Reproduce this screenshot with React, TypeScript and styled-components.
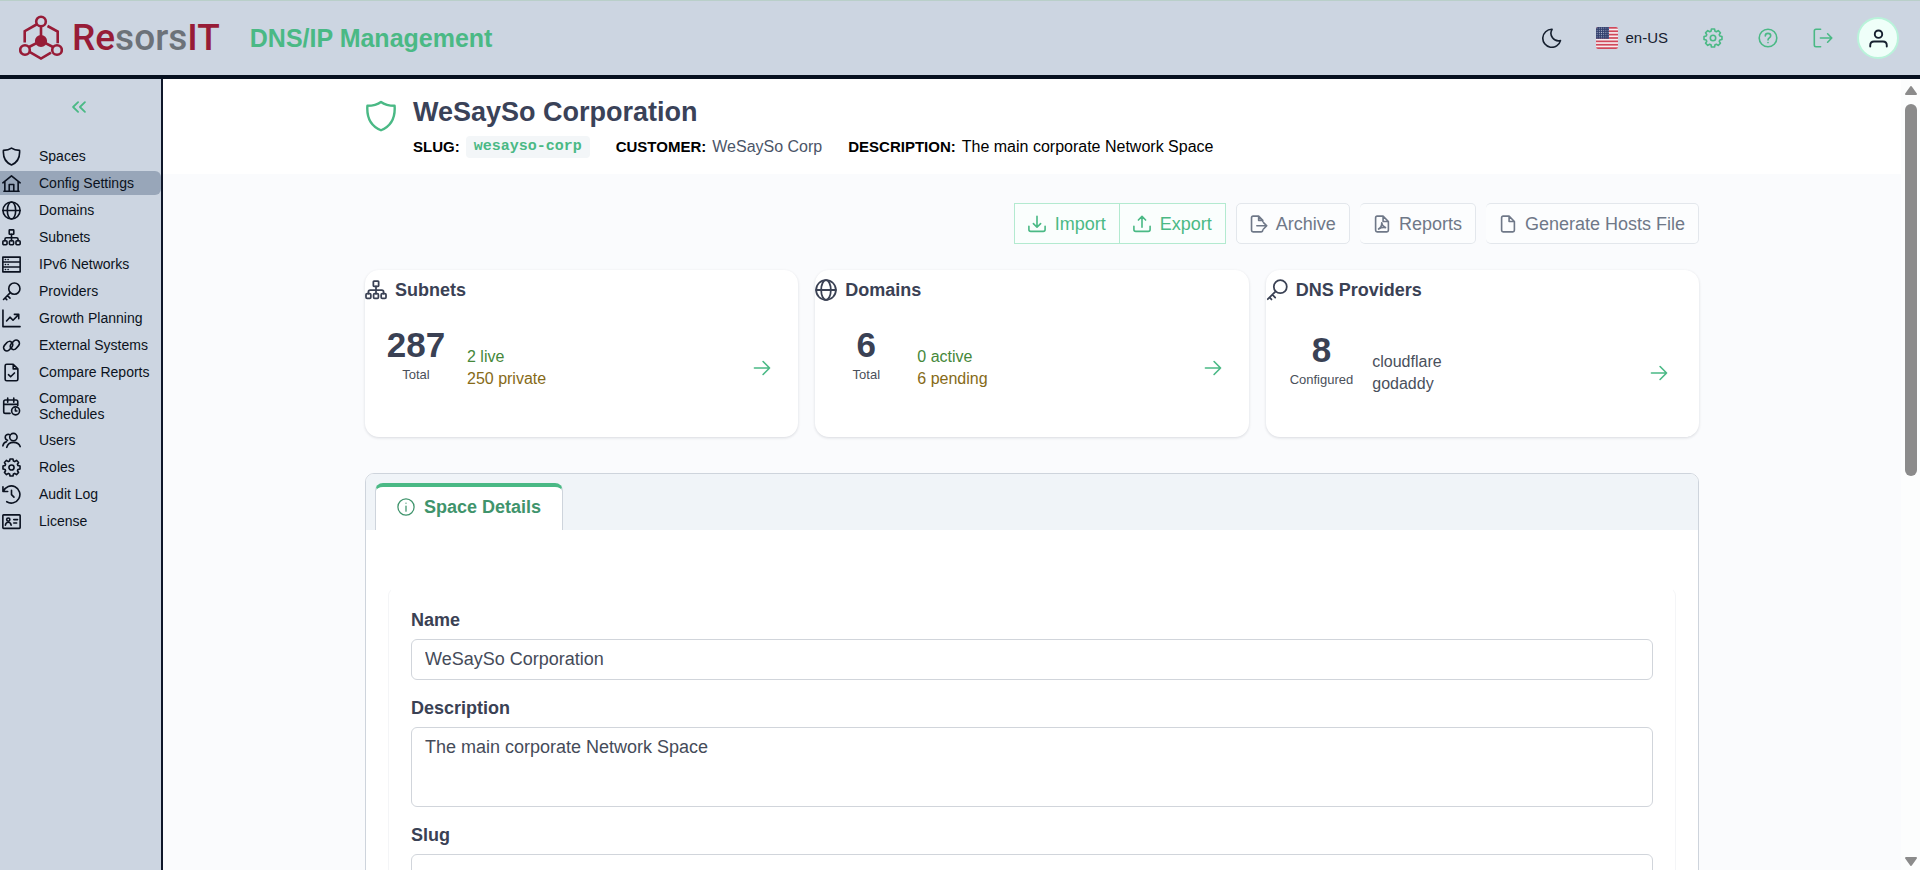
import React from "react";
import styled, { createGlobalStyle, css } from "styled-components";

const sans = `"Liberation Sans", Arial, sans-serif`;
const green = "#4ab985";
const ink = "#3a4154";

const GlobalStyle = createGlobalStyle`
  *, *::before, *::after { box-sizing: border-box; }
  html, body { margin: 0; padding: 0; }
  body { font-family: ${sans}; font-size: 18px; color: ${ink}; background: #fafbfd; }
  button, input, textarea { font: inherit; color: inherit; margin: 0; }
  a { color: inherit; text-decoration: none; }
  h1, h2, p, ul, dl, dd { margin: 0; padding: 0; }
`;

/* ---------- icons ---------- */

const gearOutline = (() => {
  const points: string[] = [];
  for (let i = 0; i < 8; i++) {
    const base = (i * Math.PI) / 4 - Math.PI / 2;
    [
      [-0.29, 7.1],
      [-0.17, 9.1],
      [0.17, 9.1],
      [0.29, 7.1],
    ].forEach(([offset, radius]) => {
      const x = 10 + radius * Math.cos(base + offset);
      const y = 10 + radius * Math.sin(base + offset);
      points.push(`${x.toFixed(2)} ${y.toFixed(2)}`);
    });
  }
  return `M${points.join("L")}Z`;
})();

const glyphs = {
  shield: <path d="M10 1.200C12 2.700 15.500 3.600 18.500 3.600C19 10.500 16.500 16.200 10 18.900C3.500 16.200 1 10.500 1.500 3.600C4.500 3.600 8 2.700 10 1.200Z" />,
  home: (
    <>
      <path d="M.9 9.300L10 1.900l9.100 7.400M3 7.800v10.300M17 7.800v10.300M2 18.200h16" />
      <path d="M7.600 18v-7h4.800v7" />
    </>
  ),
  globe: (
    <>
      <circle cx="10" cy="10" r="9" />
      <ellipse cx="10" cy="10" rx="4.400" ry="9" />
      <path d="M1 10h18" />
    </>
  ),
  sitemap: (
    <>
      <rect x="7.600" y="2" width="4.800" height="4.600" rx=".6" />
      <rect x=".9" y="13.400" width="4.400" height="4.200" rx="1" />
      <rect x="7.800" y="13.400" width="4.400" height="4.200" rx="1" />
      <rect x="14.700" y="13.400" width="4.400" height="4.200" rx="1" />
      <path d="M10 6.600v6.800M3.100 13.400v-1.600q0-1.600 1.600-1.600h10.600q1.600 0 1.600 1.600v1.600" />
    </>
  ),
  server: (
    <>
      <path d="M.9 2.200h18.200v15.600H.9ZM.9 7.400h18.200M.9 12.600h18.200" />
      <path d="M3.600 4.800h.1M6.400 4.800h.1M3.600 10h.1M6.400 10h.1M3.600 15.200h.1M6.400 15.200h.1" />
    </>
  ),
  key: (
    <>
      <circle cx="13" cy="7" r="5.900" />
      <path d="M8.800 11.200L1.600 18.400M5.800 14.300l2.600 2.600M3.200 16.800l1.800 1.800" />
    </>
  ),
  growth: (
    <>
      <path d="M1 1.200v17.400h18" />
      <path d="M4.800 12.600l3.600-4 3.200 3.200 5.600-5.600M13 5.600h4.600v4.600" />
    </>
  ),
  chain: (
    <>
      <rect x="1" y="7.200" width="11" height="7" rx="3.500" transform="rotate(-48 6.500 10.700)" />
      <rect x="8" y="5.800" width="11" height="7" rx="3.500" transform="rotate(-48 13.500 9.300)" />
    </>
  ),
  fileCheck: (
    <>
      <path d="M11.800 1.300H5q-1.700 0-1.700 1.700v14q0 1.700 1.700 1.700h10q1.700 0 1.700-1.700V6.200ZM11.800 1.300v4.900h4.900" />
      <path d="M6.800 12.300l2.300 2.200 4-4" />
    </>
  ),
  calendarClock: (
    <>
      <path d="M8.500 17.200H3.600q-1.800 0-1.800-1.800V5q0-1.800 1.800-1.800h11.200q1.800 0 1.800 1.800v4M1.800 7.800h14.800M6 1v4.400M12.400 1v4.400" />
      <circle cx="14.300" cy="14.600" r="4.200" />
      <path d="M14.100 12.400v2.300h1.600" />
    </>
  ),
  users: (
    <>
      <circle cx="12" cy="6.400" r="3.900" />
      <path d="M5 17.200c.8-3.300 3.500-5.200 7-5.200s6.300 1.700 7.100 4.400M7.600 3.700c-2.200-.7-4.200.8-4.200 3 0 1.500.9 2.700 2.400 3.100M4.800 11.300C2.700 11.800 1.300 13.200.9 15.600" />
    </>
  ),
  gear: (
    <>
      <path d={gearOutline} />
      <circle cx="10" cy="10" r="2.700" />
    </>
  ),
  history: (
    <>
      <path d="M1 1.800v5h5M1.500 6.600A9 9 0 1 1 5 17.600" />
      <path d="M10 5.600v4.600l2.600 2.600" />
    </>
  ),
  license: (
    <>
      <rect x=".9" y="3" width="18.200" height="14.200" rx=".8" />
      <circle cx="6.600" cy="8" r="1.700" />
      <path d="M3.600 13.800c.3-2 1.300-3 3-3s2.700 1 3 3M12.400 8h4M12.400 11.600h3" />
    </>
  ),
  moon: <path d="M9.700 1.300h.4a7.600 7.600 0 0 0 8.400 11.300A9 9 0 1 1 9.700 1.300Z" />,
  help: (
    <>
      <circle cx="10" cy="10" r="8.800" />
      <path d="M7.300 7.900c0-1.500 1.200-2.500 2.700-2.500s2.700 1 2.700 2.400c0 2-2.700 2.200-2.700 4.100" />
      <path d="M10 14.500v.1" />
    </>
  ),
  logout: <path d="M7.600 1.300H3q-1.700 0-1.700 1.700v14q0 1.700 1.700 1.700h4.600M7.400 10h11.400M14.600 5.800l4.200 4.200-4.200 4.200" />,
  user: (
    <>
      <circle cx="10" cy="5.400" r="3.900" />
      <path d="M1.300 18.400v-1.200q0-4 4-4h9.400q4 0 4 4v1.200" />
    </>
  ),
  collapse: <path d="M9 4.600L3.400 10 9 15.400M16.600 4.600L11 10l5.600 5.400" />,
  download: <path d="M1 12.600v3.600q0 2 2 2h14q2 0 2-2v-3.600M10 1.400v12M6 9.600l4 4 4-4" />,
  upload: <path d="M1 12.600v3.600q0 2 2 2h14q2 0 2-2v-3.600M10 13.600v-12M6 5.600l4-4 4 4" />,
  fileOut: (
    <>
      <path d="M14.200 7.200V6L9.600 1.300H3.400q-1.700 0-1.700 1.700v14q0 1.700 1.700 1.700h9.100q1.700 0 1.700-1.700v-.4M9.600 1.300V6h4.600" />
      <path d="M7.600 12h11M15 8.400l3.600 3.600-3.600 3.600" />
    </>
  ),
  filePdf: (
    <>
      <path d="M11.200 1.300H4.600q-1.700 0-1.700 1.700v14q0 1.700 1.700 1.700h10.800q1.700 0 1.700-1.700V7.200ZM11.200 1.300v5.900h5.900" />
      <path d="M6.200 15.600c2.400-1.400 3.700-4 3.500-7 .3 2.800 1.600 4.600 4.200 5.400-2.800-.4-5.500.2-7.700 1.600Z" />
    </>
  ),
  file: <path d="M11.200 1.300H4.600q-1.700 0-1.700 1.700v14q0 1.700 1.700 1.700h10.800q1.700 0 1.700-1.700V7.200ZM11.200 1.300v5.900h5.900" />,
  arrowRight: <path d="M1.600 10h16.800M11.200 2.800l7.200 7.200-7.200 7.200" />,
  info: (
    <>
      <circle cx="10" cy="10" r="9" />
      <path d="M10 9v5.600M10 5.600v.1" />
    </>
  ),
};

type GlyphName = keyof typeof glyphs;

const Svg = styled.svg`
  display: block;
  flex: none;
  fill: none;
  stroke: currentColor;
  stroke-linecap: round;
  stroke-linejoin: round;
`;

function Icon({ name, size = 20, weight = 1.6 }: { name: GlyphName; size?: number; weight?: number }) {
  return (
    <Svg width={size} height={size} viewBox="0 0 20 20" strokeWidth={weight} aria-hidden="true">
      {glyphs[name]}
    </Svg>
  );
}

/* ---------- frame ---------- */

const Shell = styled.div`
  display: flex;
  flex-direction: column;
  height: 100vh;
  overflow: hidden;
`;

const TopBar = styled.header`
  display: flex;
  align-items: center;
  flex: none;
  height: 79px;
  padding: 0 21px 0 19px;
  background: #ccd5e1;
  border-top: 1px solid #b9cfc9;
  border-bottom: 4px solid #06101f;
`;

const Brand = styled.a`
  display: flex;
  align-items: center;
  gap: 9px;
`;

const Wordmark = styled.span`
  font-family: Roboto, ${sans};
  font-size: 37px;
  line-height: 42px;
  font-weight: 500;
  color: #971c37;
`;

const WordmarkGrey = styled.span`
  color: #6c7279;
`;

const AppTitle = styled.span`
  margin-left: 30px;
  font-size: 25px;
  line-height: 30px;
  font-weight: 700;
  color: ${green};
`;

const TopActions = styled.div`
  display: flex;
  align-items: center;
  gap: 13px;
  margin-left: auto;
`;

const IconButton = styled.button<{ $accent?: boolean; $avatar?: boolean }>`
  display: flex;
  align-items: center;
  justify-content: center;
  width: 42px;
  height: 42px;
  padding: 0;
  border: 0;
  border-radius: 50%;
  background: transparent;
  color: ${(p) => (p.$accent ? green : "#16202f")};
  cursor: pointer;
  ${(p) =>
    p.$avatar &&
    css`
      background: #effff9;
      border: 2px solid #b9f3da;
    `}
`;

const LocaleButton = styled.button`
  display: flex;
  align-items: center;
  gap: 7px;
  padding: 0 11px 0 10px;
  border: 0;
  background: transparent;
  color: #16202f;
  font-size: 15px;
  line-height: 20px;
  cursor: pointer;
`;

const Body = styled.div`
  display: flex;
  flex: 1;
  min-height: 0;
`;

const SideBar = styled.nav`
  flex: none;
  width: 163px;
  background: #ccd5e1;
  border-right: 2px solid #0f172a;
`;

const CollapseButton = styled.button`
  display: flex;
  align-items: center;
  justify-content: center;
  width: 100%;
  height: 55px;
  padding: 0 4px 0 0;
  border: 0;
  background: transparent;
  color: ${green};
  cursor: pointer;
`;

const NavList = styled.ul`
  display: flex;
  flex-direction: column;
  gap: 3px;
  padding-top: 10px;
  list-style: none;
`;

const NavLink = styled.a<{ $active: boolean }>`
  display: flex;
  align-items: center;
  gap: 18px;
  min-height: 24px;
  padding-left: 2px;
  border-radius: 0 6px 6px 0;
  background: ${(p) => (p.$active ? "#98a6b9" : "transparent")};
  color: #0b1220;
  font-size: 14px;
  line-height: 16px;
`;

const NavIcon = styled.span`
  display: flex;
  flex: none;
`;

const NavLabel = styled.span`
  padding: 3px 0;
`;

/* ---------- content ---------- */

const Main = styled.main`
  flex: 1;
  min-width: 0;
  overflow-y: auto;
  scrollbar-width: none;
  background: #fafbfd;
`;

const Container = styled.div`
  max-width: 1334px;
  margin: 0 auto;
`;

const Hero = styled.section`
  padding: 17px 0 16px;
  background: #ffffff;
`;

const HeroRow = styled(Container)`
  display: flex;
  gap: 16px;
`;

const HeroIcon = styled.span`
  padding-top: 4px;
  color: ${green};
`;

const HeroTitle = styled.h1`
  font-size: 27px;
  line-height: 32px;
  font-weight: 700;
  color: #3a4258;
`;

const MetaList = styled.dl`
  display: flex;
  gap: 26px;
  margin-top: 8px;
`;

const MetaItem = styled.div`
  display: flex;
  align-items: center;
  gap: 6px;
  font-size: 16px;
  line-height: 22px;
`;

const MetaLabel = styled.dt`
  font-size: 15px;
  font-weight: 700;
  color: #000000;
`;

const MetaValue = styled.dd<{ $muted?: boolean }>`
  color: ${(p) => (p.$muted ? "#4b5568" : "#000000")};
`;

const SlugChip = styled.dd`
  padding: 0 8px;
  border-radius: 4px;
  background: #f3f6f8;
  color: ${green};
  font-family: "Liberation Mono", "Courier New", monospace;
  font-size: 15px;
  font-weight: 700;
`;

const ToolBar = styled.div`
  display: flex;
  justify-content: flex-end;
  gap: 10px;
  padding: 29px 0 26px;
`;

const ButtonPair = styled.div`
  display: flex;
`;

const ToolButton = styled.button<{ $accent?: boolean }>`
  display: flex;
  align-items: center;
  gap: 8px;
  height: 41px;
  padding: 0 13px;
  border: 1px solid #e3e7ec;
  border-radius: 5px;
  background: #fcfdfe;
  color: #6f7888;
  font-size: 18px;
  line-height: 22px;
  cursor: pointer;
  ${(p) =>
    p.$accent &&
    css`
      gap: 9px;
      border-color: #b3ead0;
      border-radius: 0;
      background: #fafefd;
      color: ${green};
      & + & {
        border-left-width: 0;
      }
    `}
`;

const CardGrid = styled.div`
  display: grid;
  grid-template-columns: repeat(3, 1fr);
  gap: 17px;
`;

const Card = styled.section`
  border-radius: 14px;
  background: #ffffff;
  box-shadow: 0 1px 3px rgba(15, 23, 42, 0.14);
`;

const CardHead = styled.h2`
  display: flex;
  align-items: center;
  gap: 8px;
  height: 40px;
  font-size: 18px;
  line-height: 22px;
  font-weight: 700;
  color: ${ink};
`;

const CardBody = styled.div<{ $roomy?: boolean }>`
  display: flex;
  gap: ${(p) => (p.$roomy ? "19px" : "21px")};
  padding: ${(p) => (p.$roomy ? "18px 31px 42px 24px" : "13px 27px 43px 21px")};
`;

const Stat = styled.div`
  min-width: 60px;
  text-align: center;
`;

const StatNumber = styled.p`
  font-size: 35px;
  line-height: 44px;
  font-weight: 700;
`;

const StatCaption = styled.p`
  font-size: 13px;
  line-height: 16px;
  color: #4a4f5a;
`;

const Breakdown = styled.div`
  display: flex;
  align-items: center;
  justify-content: space-between;
  flex: 1;
  padding-top: 23px;
`;

const tones = { green: "#45883a", amber: "#866a17", grey: "#4a505c" };

const BreakdownLine = styled.p<{ $tone: keyof typeof tones }>`
  font-size: 16px;
  line-height: 22px;
  color: ${(p) => tones[p.$tone]};
`;

const CardLink = styled.a`
  color: ${green};
`;

const Panel = styled.section`
  margin: 36px 0;
  border: 1px solid #ced4dc;
  border-radius: 9px;
  background: #ffffff;
`;

const TabStrip = styled.div`
  display: flex;
  padding: 9px 9px 0;
  border-radius: 8px 8px 0 0;
  background: #f0f4f8;
`;

const Tab = styled.button`
  display: flex;
  align-items: center;
  gap: 9px;
  height: 47px;
  padding: 0 21px 3px;
  border: 1px solid #ced4dc;
  border-top: 4px solid ${green};
  border-bottom: 0;
  border-radius: 8px 8px 0 0;
  background: #ffffff;
  color: #3f946c;
  font-size: 18px;
  line-height: 22px;
  font-weight: 700;
  cursor: pointer;
`;

const TabPanel = styled.div`
  padding: 57px 22px 22px;
`;

const Form = styled.form`
  display: flex;
  flex-direction: column;
  gap: 17px;
  padding: 21px 22px 22px;
  border: 1px solid #f4f5f7;
  border-top-color: #ffffff;
  border-radius: 9px;
`;

const Field = styled.div`
  display: flex;
  flex-direction: column;
  gap: 8px;
`;

const FieldLabel = styled.label`
  font-size: 18px;
  line-height: 22px;
  font-weight: 700;
`;

const control = css`
  width: 100%;
  padding: 8px 13px;
  border: 1px solid #d1d5db;
  border-radius: 6px;
  background: #ffffff;
  color: #454b59;
  font-size: 18px;
  line-height: 22px;
  outline: none;
`;

const TextInput = styled.input`
  ${control}
  height: 41px;
`;

const TextArea = styled.textarea`
  ${control}
  display: block;
  height: 80px;
  resize: none;
`;

/* ---------- scroll rail ---------- */

const Rail = styled.div`
  display: flex;
  flex-direction: column;
  align-items: center;
  flex: none;
  width: 19px;
  padding: 6px 0 3px 1px;
  background: #fcfdfd;
  color: #8b8b8b;
`;

const RailTrack = styled.div`
  flex: 1;
  width: 12px;
  padding: 8px 0;
`;

const RailThumb = styled.div`
  width: 12px;
  height: 50%;
  border-radius: 6px;
  background: #8b8b8b;
`;

function RailArrow({ down }: { down?: boolean }) {
  return (
    <svg width="14" height="11" viewBox="0 0 14 11" fill="currentColor" stroke="currentColor" strokeWidth="2" strokeLinejoin="round" aria-hidden="true">
      <path d={down ? "M2 2h10L7 9Z" : "M2 9h10L7 2Z"} />
    </svg>
  );
}

/* ---------- drawings ---------- */

function LogoMark() {
  return (
    <svg width="44" height="46" viewBox="0 0 44 46" fill="none" stroke="#971c37" strokeWidth="2.600" aria-hidden="true">
      <circle cx="22" cy="6.500" r="4.800" />
      <circle cx="6" cy="35" r="4.800" />
      <circle cx="38" cy="35" r="4.800" />
      <path d="M17.500 9.500L5.700 16.200v11.300M28.500 11l10.200 5.600v11.600M22 11.500V22M10 32l9-4.600M34 32l-9-4.600M10.500 36.800L22 43.500l10-5.800" />
      <circle cx="22" cy="26" r="4.800" fill="#971c37" />
    </svg>
  );
}

function UsFlag() {
  return (
    <svg width="22" height="22" viewBox="0 0 22 22" aria-hidden="true">
      <defs>
        <clipPath id="flagShape">
          <rect width="22" height="22" rx="2" />
        </clipPath>
        <pattern id="flagStars" width="2.200" height="2.200" patternUnits="userSpaceOnUse">
          <rect width="2.200" height="2.200" fill="#33416f" />
          <circle cx="1.100" cy="1.100" r=".5" fill="#b6bdd3" />
        </pattern>
      </defs>
      <g clipPath="url(#flagShape)">
        <rect width="22" height="22" fill="#f6eef0" />
        {[0, 1, 2, 3, 4, 5, 6].map((i) => (
          <rect key={i} y={i * 3.38} width="22" height="1.700" fill="#d0485a" />
        ))}
        <rect width="13" height="11.800" fill="url(#flagStars)" />
      </g>
    </svg>
  );
}

/* ---------- data ---------- */

const navItems: { label: string; icon: GlyphName }[] = [
  { label: "Spaces", icon: "shield" },
  { label: "Config Settings", icon: "home" },
  { label: "Domains", icon: "globe" },
  { label: "Subnets", icon: "sitemap" },
  { label: "IPv6 Networks", icon: "server" },
  { label: "Providers", icon: "key" },
  { label: "Growth Planning", icon: "growth" },
  { label: "External Systems", icon: "chain" },
  { label: "Compare Reports", icon: "fileCheck" },
  { label: "Compare Schedules", icon: "calendarClock" },
  { label: "Users", icon: "users" },
  { label: "Roles", icon: "gear" },
  { label: "Audit Log", icon: "history" },
  { label: "License", icon: "license" },
];

const cards: {
  title: string;
  icon: GlyphName;
  total: number;
  caption: string;
  roomy?: boolean;
  lines: { text: string; tone: keyof typeof tones }[];
}[] = [
  {
    title: "Subnets",
    icon: "sitemap",
    total: 287,
    caption: "Total",
    lines: [
      { text: "2 live", tone: "green" },
      { text: "250 private", tone: "amber" },
    ],
  },
  {
    title: "Domains",
    icon: "globe",
    total: 6,
    caption: "Total",
    lines: [
      { text: "0 active", tone: "green" },
      { text: "6 pending", tone: "amber" },
    ],
  },
  {
    title: "DNS Providers",
    icon: "key",
    total: 8,
    caption: "Configured",
    roomy: true,
    lines: [
      { text: "cloudflare", tone: "grey" },
      { text: "godaddy", tone: "grey" },
    ],
  },
];

export default function App() {
  return (
    <Shell>
      <GlobalStyle />
      <TopBar>
        <Brand href="#">
          <LogoMark />
          <Wordmark>
            Re<WordmarkGrey>sors</WordmarkGrey>IT
          </Wordmark>
        </Brand>
        <AppTitle>DNS/IP Management</AppTitle>
        <TopActions>
          <IconButton aria-label="Dark mode">
            <Icon name="moon" />
          </IconButton>
          <LocaleButton>
            <UsFlag />
            en-US
          </LocaleButton>
          <IconButton $accent aria-label="Settings">
            <Icon name="gear" />
          </IconButton>
          <IconButton $accent aria-label="Help">
            <Icon name="help" />
          </IconButton>
          <IconButton $accent aria-label="Log out">
            <Icon name="logout" />
          </IconButton>
          <IconButton $avatar aria-label="Account">
            <Icon name="user" size={19} weight={2} />
          </IconButton>
        </TopActions>
      </TopBar>
      <Body>
        <SideBar>
          <CollapseButton aria-label="Collapse menu">
            <Icon name="collapse" size={18} weight={2} />
          </CollapseButton>
          <NavList>
            {navItems.map((item) => (
              <li key={item.label}>
                <NavLink href="#" $active={item.label === "Config Settings"}>
                  <NavIcon>
                    <Icon name={item.icon} size={19} weight={1.7} />
                  </NavIcon>
                  <NavLabel>{item.label}</NavLabel>
                </NavLink>
              </li>
            ))}
          </NavList>
        </SideBar>
        <Main>
          <Hero>
            <HeroRow>
              <HeroIcon>
                <Icon name="shield" size={32} weight={1.5} />
              </HeroIcon>
              <div>
                <HeroTitle>WeSaySo Corporation</HeroTitle>
                <MetaList>
                  <MetaItem>
                    <MetaLabel>SLUG:</MetaLabel>
                    <SlugChip>wesayso-corp</SlugChip>
                  </MetaItem>
                  <MetaItem>
                    <MetaLabel>CUSTOMER:</MetaLabel>
                    <MetaValue $muted>WeSaySo Corp</MetaValue>
                  </MetaItem>
                  <MetaItem>
                    <MetaLabel>DESCRIPTION:</MetaLabel>
                    <MetaValue>The main corporate Network Space</MetaValue>
                  </MetaItem>
                </MetaList>
              </div>
            </HeroRow>
          </Hero>
          <Container>
            <ToolBar>
              <ButtonPair>
                <ToolButton $accent>
                  <Icon name="download" size={18} weight={1.8} />
                  Import
                </ToolButton>
                <ToolButton $accent>
                  <Icon name="upload" size={18} weight={1.8} />
                  Export
                </ToolButton>
              </ButtonPair>
              <ToolButton>
                <Icon name="fileOut" size={18} weight={1.8} />
                Archive
              </ToolButton>
              <ToolButton>
                <Icon name="filePdf" size={18} weight={1.8} />
                Reports
              </ToolButton>
              <ToolButton>
                <Icon name="file" size={18} weight={1.8} />
                Generate Hosts File
              </ToolButton>
            </ToolBar>
            <CardGrid>
              {cards.map((card) => (
                <Card key={card.title}>
                  <CardHead>
                    <Icon name={card.icon} size={22} />
                    {card.title}
                  </CardHead>
                  <CardBody $roomy={card.roomy}>
                    <Stat>
                      <StatNumber>{card.total}</StatNumber>
                      <StatCaption>{card.caption}</StatCaption>
                    </Stat>
                    <Breakdown>
                      <div>
                        {card.lines.map((line) => (
                          <BreakdownLine key={line.text} $tone={line.tone}>
                            {line.text}
                          </BreakdownLine>
                        ))}
                      </div>
                      <CardLink href="#" aria-label={`Open ${card.title}`}>
                        <Icon name="arrowRight" size={18} weight={1.8} />
                      </CardLink>
                    </Breakdown>
                  </CardBody>
                </Card>
              ))}
            </CardGrid>
            <Panel>
              <TabStrip role="tablist">
                <Tab role="tab" aria-selected="true">
                  <Icon name="info" size={18} weight={1.4} />
                  Space Details
                </Tab>
              </TabStrip>
              <TabPanel role="tabpanel">
                <Form>
                  <Field>
                    <FieldLabel htmlFor="name">Name</FieldLabel>
                    <TextInput id="name" defaultValue="WeSaySo Corporation" />
                  </Field>
                  <Field>
                    <FieldLabel htmlFor="description">Description</FieldLabel>
                    <TextArea id="description" defaultValue="The main corporate Network Space" />
                  </Field>
                  <Field>
                    <FieldLabel htmlFor="slug">Slug</FieldLabel>
                    <TextInput id="slug" />
                  </Field>
                </Form>
              </TabPanel>
            </Panel>
          </Container>
        </Main>
        <Rail aria-hidden="true">
          <RailArrow />
          <RailTrack>
            <RailThumb />
          </RailTrack>
          <RailArrow down />
        </Rail>
      </Body>
    </Shell>
  );
}
